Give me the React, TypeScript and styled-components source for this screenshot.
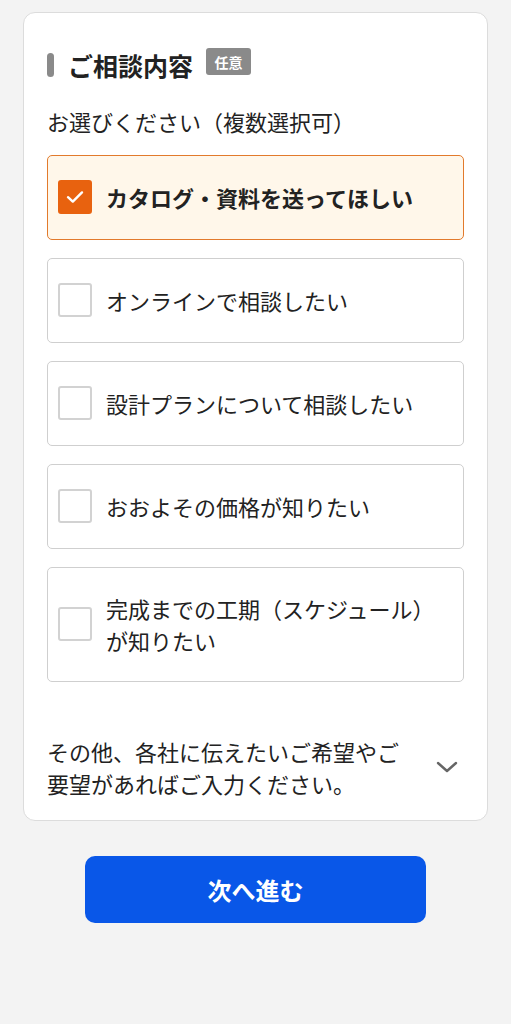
import React, { useState } from "react";
import styled, { createGlobalStyle, css } from "styled-components";

const GlobalStyle = createGlobalStyle`
  html, body {
    margin: 0;
    padding: 0;
    background: #f3f3f3;
  }
  body {
    font-family: "Noto Sans CJK JP", "Noto Sans", sans-serif;
    color: #222;
  }
  * { box-sizing: border-box; }
`;

const Page = styled.div`
  padding: 12px 23px 100px;
  display: flex;
  flex-direction: column;
  align-items: center;
`;

const Card = styled.section`
  width: 465px;
  background: #fff;
  border: 1px solid #dcdcdc;
  border-radius: 12px;
  padding: 37px 23px 21px;
  display: flex;
  flex-direction: column;
`;

const Header = styled.div`
  display: flex;
  align-items: center;
  height: 30px;
`;

const Bar = styled.span`
  width: 7px;
  height: 24px;
  border-radius: 4px;
  background: #8a8a8a;
  margin-right: 14px;
`;

const Title = styled.h2`
  margin: 0;
  font-size: 25px;
  font-weight: 700;
  line-height: 30px;
  color: #222;
`;

const Badge = styled.span`
  margin-left: 13px;
  margin-bottom: 7px;
  width: 45px;
  height: 27px;
  border-radius: 3px;
  background: #8a8a8a;
  color: #fff;
  font-size: 14px;
  font-weight: 700;
  display: flex;
  align-items: center;
  justify-content: center;
`;

const Sub = styled.p`
  margin: 25px 0 18px;
  font-size: 22px;
  line-height: 32px;
  color: #222;
`;

const Options = styled.div`
  display: flex;
  flex-direction: column;
  gap: 18px;
`;

const Option = styled.label<{ $checked: boolean }>`
  display: flex;
  align-items: center;
  gap: 14px;
  padding: 24px 10px 25px;
  border: 1px solid #cfcfcf;
  border-radius: 5px;
  background: #fff;
  cursor: pointer;
  ${(p) =>
    p.$checked &&
    css`
      border-color: #e27a2c;
      background: #fff7ea;
    `}
`;

const Box = styled.span<{ $checked: boolean }>`
  flex: none;
  width: 34px;
  height: 34px;
  border-radius: 3px;
  border: 2px solid #d2d2d2;
  background: #fff;
  display: flex;
  align-items: center;
  justify-content: center;
  ${(p) =>
    p.$checked &&
    css`
      border-color: #e8620f;
      background: #e8620f;
    `}
`;

const OptText = styled.span<{ $checked: boolean }>`
  font-size: 22px;
  line-height: 32px;
  color: #222;
  font-weight: ${(p) => (p.$checked ? 700 : 400)};
`;

const Other = styled.div`
  margin-top: 53px;
  display: flex;
  align-items: center;
  justify-content: space-between;
`;

const OtherText = styled.p`
  margin: 0;
  width: 366px;
  font-size: 22px;
  line-height: 32px;
  color: #222;
`;

const Chevron = styled.span`
  width: 24px;
  height: 24px;
  margin-right: 5px;
  display: flex;
  align-items: center;
  justify-content: center;
`;

const NextButton = styled.button`
  margin-top: 35px;
  width: 341px;
  height: 67px;
  border: none;
  border-radius: 10px;
  background: #0957e8;
  color: #fff;
  font-family: "Noto Sans CJK JP", "Noto Sans", sans-serif;
  font-size: 24px;
  font-weight: 700;
  cursor: pointer;
`;

const items = [
  "カタログ・資料を送ってほしい",
  "オンラインで相談したい",
  "設計プランについて相談したい",
  "おおよその価格が知りたい",
  "完成までの工期（スケジュール）が知りたい",
];

export default function App() {
  const [checked, setChecked] = useState<boolean[]>([true, false, false, false, false]);
  const toggle = (i: number) =>
    setChecked((c) => c.map((v, j) => (j === i ? !v : v)));

  return (
    <>
      <GlobalStyle />
      <Page>
        <Card>
          <Header>
            <Bar />
            <Title>ご相談内容</Title>
            <Badge>任意</Badge>
          </Header>
          <Sub>お選びください（複数選択可）</Sub>
          <Options>
            {items.map((t, i) => (
              <Option key={t} $checked={checked[i]} onClick={() => toggle(i)}>
                <Box $checked={checked[i]}>
                  {checked[i] && (
                    <svg width="18" height="14" viewBox="0 0 18 14" fill="none">
                      <path
                        d="M2 7.2 L6.8 11.6 L16 2.4"
                        stroke="#fff"
                        strokeWidth="2.4"
                        strokeLinecap="round"
                        strokeLinejoin="round"
                      />
                    </svg>
                  )}
                </Box>
                <OptText $checked={checked[i]}>
                  {i === 4 ? (
                    <>
                      完成までの工期（スケジュール）
                      <br />
                      が知りたい
                    </>
                  ) : (
                    t
                  )}
                </OptText>
              </Option>
            ))}
          </Options>
          <Other>
            <OtherText>その他、各社に伝えたいご希望やご要望があればご入力ください。</OtherText>
            <Chevron>
              <svg width="22" height="14" viewBox="0 0 22 14" fill="none">
                <path
                  d="M2 3 L11 11 L20 3"
                  stroke="#666"
                  strokeWidth="2.4"
                  strokeLinecap="round"
                  strokeLinejoin="round"
                />
              </svg>
            </Chevron>
          </Other>
        </Card>
        <NextButton>次へ進む</NextButton>
      </Page>
    </>
  );
}
